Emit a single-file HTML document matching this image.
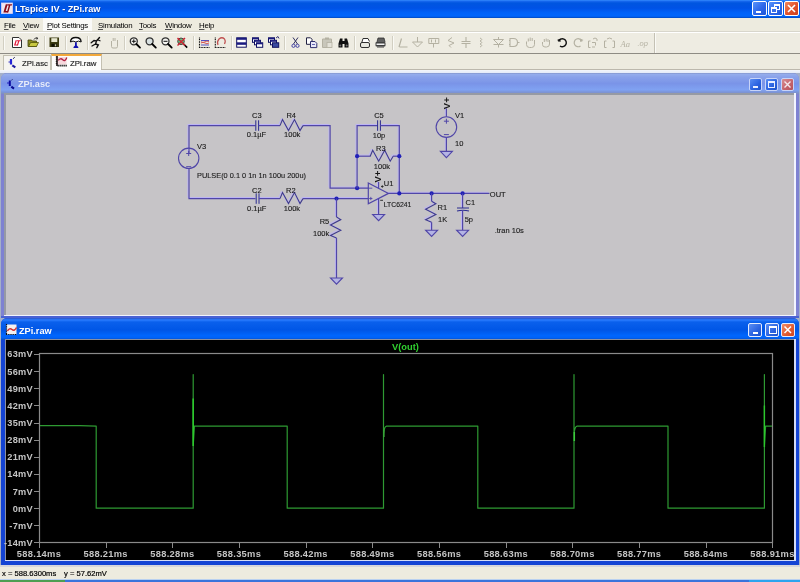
<!DOCTYPE html><html><head><meta charset="utf-8"><style>
*{margin:0;padding:0;box-sizing:border-box}
html,body{width:800px;height:582px;overflow:hidden;background:#EDEBDF;font-family:"Liberation Sans",sans-serif}
.a{position:absolute}
svg{position:absolute;left:0;top:0;overflow:visible;will-change:transform}
.t{white-space:nowrap;will-change:transform}
.tb{position:absolute;top:1px;width:15px;height:15px;border:1px solid #fff;border-radius:2px;background:linear-gradient(135deg,#5A94FA,#2C66EA 55%,#1E56D6)}
.mb{position:absolute;border:1px solid #E8EEFC;border-radius:2px;background:linear-gradient(135deg,#5A8EF4,#2A62E0 60%,#1E52C8)}
.wt{position:absolute;font-weight:bold;font-size:9.2px;line-height:14px;white-space:nowrap;will-change:transform}
.sep{position:absolute;top:36px;width:1px;height:14px;background:#D2CFC2;box-shadow:1px 0 0 #FAFAF6}
</style></head><body>
<div class="a" style="left:0;top:0;width:800px;height:17.5px;background:linear-gradient(#3A92FF 0,#1A6AF0 1px,#0056E0 3px,#0052E6 45%,#0062F8 70%,#0066FC 90%,#0048C0 100%)"></div>
<svg width="20" height="18"><rect x="1.5" y="3" width="11" height="10.5" fill="#F0E6EE" stroke="#DCD4F4" stroke-width="0.8"/><path d="M5.8 4.2l-2.4 8.3h4.2l0.4-1.4H5.7l2-6.9z" fill="#8A0C1A"/><path d="M7.6 4.2h4.6l-0.4 1.4h-1.5l-2 6.9H6.8l2-6.9H7.2z" fill="#8A0C1A"/></svg>
<div class="a t" style="left:15px;top:2px;color:#fff;font-weight:bold;font-size:9.2px;line-height:14px;text-shadow:0.5px 0.5px 0 #0A3AA0">LTspice IV - ZPi.raw</div>
<div class="tb" style="left:752px"><div class="a" style="left:3px;top:9px;width:5px;height:2px;background:#fff"></div></div>
<div class="tb" style="left:768px"><div class="a" style="left:5px;top:2px;width:6px;height:6px;border:1px solid #fff;border-top-width:2px"></div><div class="a" style="left:2px;top:5px;width:6px;height:6px;border:1px solid #fff;border-top-width:2px;background:#3A6FE8"></div></div>
<div class="tb" style="left:784px;background:linear-gradient(135deg,#F2885E,#E0502A 55%,#CC4020)"><svg width="13" height="13"><path d="M3 3L10 10M10 3L3 10" stroke="#fff" stroke-width="1.6"/></svg></div>
<div class="a" style="left:0;top:17.5px;width:800px;height:13.5px;background:#EDEBDF"></div>
<div class="a" style="left:43px;top:18px;width:49px;height:13px;background:#FAFAF8"></div>
<div class="a t" style="left:4px;top:18.5px;font-size:7.9px;letter-spacing:-0.25px;line-height:13px;color:#000"><u style="text-decoration-thickness:0.6px;text-underline-offset:0.8px;text-decoration-color:#505050">F</u>ile</div>
<div class="a t" style="left:23.2px;top:18.5px;font-size:7.9px;letter-spacing:-0.25px;line-height:13px;color:#000"><u style="text-decoration-thickness:0.6px;text-underline-offset:0.8px;text-decoration-color:#505050">V</u>iew</div>
<div class="a t" style="left:46.8px;top:18.5px;font-size:7.9px;letter-spacing:-0.25px;line-height:13px;color:#000"><u style="text-decoration-thickness:0.6px;text-underline-offset:0.8px;text-decoration-color:#505050">P</u>lot Settings</div>
<div class="a t" style="left:97.5px;top:18.5px;font-size:7.9px;letter-spacing:-0.25px;line-height:13px;color:#000"><u style="text-decoration-thickness:0.6px;text-underline-offset:0.8px;text-decoration-color:#505050">S</u>imulation</div>
<div class="a t" style="left:139px;top:18.5px;font-size:7.9px;letter-spacing:-0.25px;line-height:13px;color:#000"><u style="text-decoration-thickness:0.6px;text-underline-offset:0.8px;text-decoration-color:#505050">T</u>ools</div>
<div class="a t" style="left:164.5px;top:18.5px;font-size:7.9px;letter-spacing:-0.25px;line-height:13px;color:#000"><u style="text-decoration-thickness:0.6px;text-underline-offset:0.8px;text-decoration-color:#505050">W</u>indow</div>
<div class="a t" style="left:198.8px;top:18.5px;font-size:7.9px;letter-spacing:-0.25px;line-height:13px;color:#000"><u style="text-decoration-thickness:0.6px;text-underline-offset:0.8px;text-decoration-color:#505050">H</u>elp</div>
<div class="a" style="left:0;top:31px;width:800px;height:1px;background:#D8D6CC"></div>
<div class="a" style="left:0;top:32px;width:800px;height:1px;background:#FFFFFF"></div>
<div class="a" style="left:0;top:33px;width:800px;height:20px;background:#EEECE2"></div>
<div class="a" style="left:0;top:53px;width:800px;height:1px;background:#8E8C84"></div>
<div class="sep" style="left:2.5px"></div>
<div class="sep" style="left:43.5px"></div>
<div class="sep" style="left:65px"></div>
<div class="sep" style="left:87px"></div>
<div class="sep" style="left:123.5px"></div>
<div class="sep" style="left:193px"></div>
<div class="sep" style="left:231px"></div>
<div class="sep" style="left:284px"></div>
<div class="sep" style="left:353.5px"></div>
<div class="sep" style="left:391.5px"></div>
<div class="a" style="left:654px;top:33px;width:1px;height:20px;background:#C4C1B4;box-shadow:1px 0 0 #FAFAF6"></div>
<div class="a" style="left:0;top:54px;width:800px;height:16px;background:#EDEBDF"></div>
<div class="a" style="left:3px;top:54.5px;width:48px;height:15.5px;background:#F6F5F0;border:1px solid #C4C1B2;border-bottom:none"></div>
<div class="a" style="left:50.5px;top:54px;width:51px;height:16px;background:#FDFDFB;border:1px solid #C4C1B2;border-top:2px solid #F2A83A;border-bottom:none"></div>
<div class="a t" style="left:21.7px;top:57px;font-size:7.8px;line-height:13px;color:#1A1A1A;-webkit-text-stroke:0.15px #1A1A1A">ZPi.asc</div>
<div class="a t" style="left:69.5px;top:56.5px;font-size:7.8px;line-height:13px;color:#1A1A1A;-webkit-text-stroke:0.15px #1A1A1A">ZPi.raw</div>
<div class="a" style="left:0;top:70px;width:800px;height:495px;background:#A4B0C8"></div>
<div class="a" style="left:101px;top:68.5px;width:699px;height:1.5px;background:#BCB8AC"></div>
<div class="a" style="left:0;top:70px;width:800px;height:3px;background:linear-gradient(#F4F6FA,#E4EAF8)"></div>
<div class="a" style="left:1px;top:73px;width:798px;height:245px;background:#7E82D2;border-radius:6px 6px 0 0"></div>
<div class="a" style="left:1px;top:73px;width:798px;height:21px;border-radius:6px 6px 0 0;background:linear-gradient(#8496CC 0,#94ACEC 1.5px,#8AA2EA 4px,#7A94E8 50%,#80A2F2 80%,#7C98E0 88%,#7E8CC0 100%)"></div>
<div class="a" style="left:4px;top:93px;width:792px;height:223px;background:#969AA4;border-right:2px solid #F2F4FF;border-bottom:1.5px solid #F2F4FF"></div>
<div class="a" style="left:5.5px;top:94.5px;width:788.5px;height:220px;background:#C6C4C7"></div>
<div class="wt" style="left:18.4px;top:77px;color:#E6ECFA">ZPi.asc</div>
<div class="mb" style="left:748.5px;top:78px;width:13px;height:13px;border-color:#C8D4F8;"></div>
<div class="mb" style="left:765px;top:78px;width:13px;height:13px;border-color:#C8D4F8;"></div>
<div class="mb" style="left:781px;top:78px;width:13px;height:13px;border-color:#C8D4F8;background:linear-gradient(135deg,#D89094,#C4626A 60%,#B4525A);"></div>
<div class="a" style="left:752.5px;top:86px;width:5px;height:2px;background:#E8EEFF"></div>
<div class="a" style="left:768px;top:81px;width:7px;height:7px;border:1px solid #E8EEFF;border-top-width:2px"></div>
<svg width="1" height="1"><path d="M784.5 81.5l6 6M790.5 81.5l-6 6" stroke="#F4E8EC" stroke-width="1.4"/></svg>
<div class="a" style="left:1px;top:316px;width:798px;height:2px;background:#4A62D4"></div>
<div class="a" style="left:1px;top:318px;width:798px;height:247px;background:#1444D4;border-radius:6px 6px 0 0"></div>
<div class="a" style="left:1px;top:318px;width:798px;height:22px;border-radius:6px 6px 0 0;background:linear-gradient(#2A54C8 0,#2A7CFF 2px,#0A60EC 4px,#0056E6 55%,#0066FE 80%,#0062F6 90%,#0848C0 100%)"></div>
<div class="a" style="left:4.5px;top:339.2px;width:791.5px;height:222.3px;background:#8A90A0;border-right:2px solid #D4DCF6;border-bottom:1.5px solid #D4DCF6"></div>
<div class="a" style="left:5.5px;top:340.3px;width:788.5px;height:219.5px;background:#000"></div>
<div class="wt" style="left:19px;top:323.5px;color:#fff">ZPi.raw</div>
<div class="mb" style="left:748px;top:323px;width:14px;height:14px;border-color:#E4ECFF;"></div>
<div class="mb" style="left:765px;top:323px;width:14px;height:14px;border-color:#E4ECFF;"></div>
<div class="mb" style="left:781px;top:323px;width:14px;height:14px;border-color:#E4ECFF;background:linear-gradient(135deg,#F08C68,#E05A30 60%,#CC4620);"></div>
<div class="a" style="left:752.5px;top:332px;width:5px;height:2px;background:#fff"></div>
<div class="a" style="left:768.5px;top:326px;width:8px;height:8px;border:1px solid #fff;border-top-width:2px"></div>
<svg width="1" height="1"><path d="M784.5 326.5l6.5 6.5M791 326.5l-6.5 6.5" stroke="#fff" stroke-width="1.5"/></svg>
<div class="a" style="left:0;top:564.5px;width:800px;height:14px;background:#EDEBDF;border-top:2.5px solid #D6D6DA"></div>
<div class="a t" style="left:1.5px;top:567.5px;font-size:7.6px;line-height:12px;color:#000;-webkit-text-stroke:0.2px #000">x = 588.6300ms</div>
<div class="a t" style="left:64px;top:567.5px;font-size:7.6px;line-height:12px;color:#000;-webkit-text-stroke:0.2px #000">y = 57.62mV</div>
<div class="a" style="left:0;top:578.5px;width:800px;height:3.5px;background:#3A74DC;border-top:1px solid #B8D0F0"></div>
<div class="a" style="left:0;top:579.5px;width:64.5px;height:2.5px;background:#4E9E52"></div>
<div class="a" style="left:749px;top:579.5px;width:51px;height:2.5px;background:#2EA4EE"></div>
<svg width="800" height="582" style="font-family:'Liberation Sans',sans-serif"><path d="M12.5 37.5h6.5l2.5 2.5v7.5h-9z" fill="#fff" stroke="#303030" stroke-width="1"/><path d="M15.6 40.2l-1.6 5.3h3.4l0.3-1h-2.1l1.3-4.3z" fill="#E01838"/><path d="M17 40.2h3.8l-0.3 1h-1.2l-1.3 4.3h-1.2l1.3-4.3h-1.3z" fill="#E01838"/><path d="M28 40h3.5l1 1h4v5.5H28z" fill="#8C8C20" stroke="#40400A" stroke-width="0.8"/><path d="M28.5 46.5l2-4h8l-2 4z" fill="#C8C840" stroke="#50500A" stroke-width="0.8"/><path d="M34 39.5q1.5-2.5 3.5-1.5" fill="none" stroke="#202020" stroke-width="1"/><path d="M37 37.3l1.2 1.8l-2 0.3z" fill="#202020"/><rect x="49.5" y="37.5" width="9.5" height="9.5" fill="#3A3A10"/><rect x="51.3" y="38.2" width="6" height="3.8" fill="#E8E8D0"/><rect x="51.5" y="43.8" width="5.5" height="3" fill="#101000"/><rect x="54.8" y="44.3" width="1.4" height="2" fill="#C8C8A0"/><path d="M70.5 42q0-4.5 5.3-4.5q5.3 0 5.3 4.5" fill="#fff" stroke="#101010" stroke-width="1.3"/><path d="M70.5 42q2.5-1.8 5.3 0q2.8-1.8 5.3 0" fill="none" stroke="#101010" stroke-width="1"/><path d="M75 42.2h1.8v3.3l1.5 1.5v1h-4.8v-1l1.5-1.5z" fill="#1010B0"/><path d="M99.5 37.5l-3 3.5l-2.5-0.5l-2.8 2.2M96.5 41l-1 3l2.8 1l-1.5 2.7M95.5 44l-3.5 2" fill="none" stroke="#101010" stroke-width="1.4" stroke-linecap="round"/><path d="M97 39.5l3.5 1.5" stroke="#101010" stroke-width="1.1"/><path d="M111.5 41v5.5q0 1.5 1.5 1.5h3q1.5 0 1.5-1.5V40M113.2 41v-3M115 41v-3" fill="none" stroke="#B4B1A2" stroke-width="1"/><circle cx="133.8" cy="41.3" r="3.5" fill="#F4F4F0" stroke="#303030" stroke-width="1.3"/><path d="M136.4 44l3.6 3.6" stroke="#000" stroke-width="1.8" stroke-linecap="round"/><path d="M131.8 41.3h4" stroke="#101010" stroke-width="1"/><path d="M133.8 39.3v4" stroke="#101010" stroke-width="1"/><circle cx="149.6" cy="41.3" r="3.5" fill="#D8E0E0" stroke="#303030" stroke-width="1.3"/><path d="M152.2 44l3.6 3.6" stroke="#000" stroke-width="1.8" stroke-linecap="round"/><circle cx="165.5" cy="41.3" r="3.5" fill="#F4F4F0" stroke="#303030" stroke-width="1.3"/><path d="M168.1 44l3.6 3.6" stroke="#000" stroke-width="1.8" stroke-linecap="round"/><path d="M163.5 41.3h4" stroke="#101010" stroke-width="1"/><circle cx="181" cy="41.3" r="3.3" fill="#60C080" stroke="#504040" stroke-width="1"/><path d="M183.6 44l3.6 3.6" stroke="#000" stroke-width="1.6"/><path d="M177.5 38l7.5 7.5M185 38l-7.5 7.5" stroke="#D02030" stroke-width="1.4"/><path d="M199.5 37.5v10h10" fill="none" stroke="#101010" stroke-width="1.1" stroke-dasharray="1 0.6"/><path d="M201 40.5h8M201 45h8" stroke="#5050C0" stroke-width="1"/><path d="M201 43q2-1.5 4 0t4 0M201 41.8q2 1.5 4 0t4 0" fill="none" stroke="#D05050" stroke-width="0.9"/><path d="M215.3 37.5v10h10" fill="none" stroke="#101010" stroke-width="1.1" stroke-dasharray="1 0.6"/><path d="M218 45q-1.5-3 1-6q3-2.5 5.5 0q1.5 2 0 5" fill="none" stroke="#C05050" stroke-width="1.2"/><rect x="236.7" y="37.8" width="9.6" height="9.4" fill="#fff" stroke="#101060" stroke-width="1"/><rect x="236.7" y="37.8" width="9.6" height="2" fill="#1A1A80"/><rect x="236.7" y="42.3" width="9.6" height="1" fill="#1A1A80"/><rect x="236.7" y="43" width="9.6" height="1.8" fill="#1A1A80"/><rect x="252.5" y="37.8" width="6" height="4.5" fill="#fff" stroke="#101060"/><rect x="252.5" y="37.8" width="6" height="1.5" fill="#1A1A80"/><rect x="254.5" y="40.3" width="6" height="4.5" fill="#fff" stroke="#101060"/><rect x="254.5" y="40.3" width="6" height="1.5" fill="#1A1A80"/><rect x="256.5" y="42.8" width="6.2" height="4.5" fill="#fff" stroke="#101060"/><rect x="256.5" y="42.8" width="6.2" height="1.5" fill="#1A1A80"/><rect x="268.5" y="37.8" width="6" height="4.5" fill="#fff" stroke="#101060"/><rect x="268.5" y="37.8" width="6" height="1.5" fill="#1A1A80"/><rect x="270.5" y="40.3" width="6" height="4.5" fill="#fff" stroke="#101060"/><rect x="270.5" y="40.3" width="6" height="1.5" fill="#1A1A80"/><rect x="272.5" y="42.8" width="6.2" height="4.5" fill="#3A4AA0" stroke="#101060"/><path d="M276 38l2-1.5l1 2" fill="none" stroke="#101060" stroke-width="0.8"/><path d="M293 37.5l4.5 6.5M298 37.5l-4.5 6.5" stroke="#303060" stroke-width="1"/><circle cx="293.5" cy="45.8" r="1.6" fill="none" stroke="#4040A0" stroke-width="1"/><circle cx="297.5" cy="45.8" r="1.6" fill="none" stroke="#4040A0" stroke-width="1"/><path d="M306.5 37.8h4l1.5 1.5v5h-5.5z" fill="#fff" stroke="#202040" stroke-width="1"/><path d="M310.5 41.5h4.5l1.8 1.8v4.3h-6.3z" fill="#E8E8F8" stroke="#303070" stroke-width="1"/><path d="M312 44.5h3" stroke="#4040A0" stroke-width="0.8"/><path d="M322.5 39h9v8.5h-9z" fill="#C8C6BA" stroke="#B4B1A2"/><rect x="325" y="37.5" width="4" height="2" fill="#B4B1A2"/><rect x="327" y="42.5" width="5" height="5" fill="#E4E2D8" stroke="#B4B1A2" stroke-width="0.8"/><path d="M338.5 47.5v-4l1.5-5h2.5v9zM348.5 47.5v-4l-1.5-5h-2.5v9z" fill="#101010"/><rect x="342" y="41" width="3" height="3" fill="#101010"/><circle cx="340.3" cy="45.5" r="1" fill="#707070"/><circle cx="346.7" cy="45.5" r="1" fill="#707070"/><path d="M361.5 43.5l1.5-5h5l1.5 3" fill="#fff" stroke="#303030" stroke-width="1"/><rect x="360.5" y="42.5" width="9" height="5" rx="1.5" fill="#E8E8E0" stroke="#303030" stroke-width="1"/><path d="M377 42l1-4h6l1 4" fill="#606060" stroke="#303030" stroke-width="0.8"/><rect x="375.5" y="42" width="10" height="4.5" rx="1" fill="#404040"/><rect x="376.5" y="43.5" width="8" height="1.5" fill="#F0F0F0"/><path d="M377 47h7" stroke="#404040"/><path d="M399 47l2.5-8.5M399.5 47h8" stroke="#B4B1A2" stroke-width="1.2"/><path d="M417.5 37v5M412.5 42h10l-5 5z" fill="none" stroke="#B4B1A2" stroke-width="1"/><path d="M428.8 38.5h10v5h-10zM431.5 39.5v3M435.5 39.5v3M433.5 43.5v4" fill="none" stroke="#B4B1A2" stroke-width="1"/><path d="M452 37.5l-4 3l6 2.5l-5 2.5l2 2" fill="none" stroke="#B4B1A2" stroke-width="1"/><path d="M466 37v4.5M461.5 41.5h9M461.5 43.5h9M466 43.5v4.5" fill="none" stroke="#B4B1A2" stroke-width="1.1"/><path d="M480 38q3.5 1.5 0 3q3.5 1.5 0 3q3.5 1.5 0 3" fill="none" stroke="#B4B1A2" stroke-width="1"/><path d="M498.5 37v2M493.5 39.5h10l-5 5zM493.5 44.5h10M498.5 44.5v3" fill="none" stroke="#B4B1A2" stroke-width="1"/><path d="M510 38.5h3.5q4 0 4 4t-4 4H510zM517.5 42.5h2M509 40.5h1M509 44.5h1" fill="none" stroke="#B4B1A2" stroke-width="1.1"/><path d="M526.5 41.5v3q0 3 3 3h2q3 0 3-3v-4.5M528.3 41.5v-3M530.2 41v-3.5M532.2 41v-3" fill="none" stroke="#B4B1A2" stroke-width="1"/><path d="M542.5 42v2.5q0 2.5 2.5 2.5h1.5q3 0 3-3V40M544.3 42v-3M546.2 41.5v-3M548 42v-3" fill="none" stroke="#B4B1A2" stroke-width="1"/><path d="M558.5 41.5a4 4 0 1 1 1.5 4.5" fill="none" stroke="#101010" stroke-width="1.4"/><path d="M557 40l3.5-1.5v3.5z" fill="#101010"/><path d="M582 41.5a4 4 0 1 0 -1.5 4.5" fill="none" stroke="#B4B1A2" stroke-width="1.2"/><path d="M583.5 40l-3.5-1.5v3.5z" fill="#B4B1A2"/><path d="M588.5 41v6.5M588.5 47.5h2M588.5 41h2M592 42.5h3.5v3M592 47h3M593 39q2-2 4 0v2" fill="none" stroke="#B4B1A2" stroke-width="1"/><path d="M604.5 41v6.5h2M604.5 41h2M614.5 41v6.5h-2M614.5 41h-2M607 39q2.5-2 5 0" fill="none" stroke="#B4B1A2" stroke-width="1"/><text x="620.5" y="46.5" font-size="8.5" font-style="italic" font-family="Liberation Serif" fill="#B4B1A2">Aa</text><text x="637.5" y="45.5" font-size="7.5" font-style="italic" fill="#B4B1A2">.op</text><path d="M13 58.8l1.8-1.6" stroke="#303060" stroke-width="1"/><path d="M11 59v5.5" stroke="#2424D8" stroke-width="2.2"/><path d="M8.5 62h2" stroke="#3030C0" stroke-width="1"/><path d="M12.3 65.3l3 2" stroke="#1A1AA0" stroke-width="2"/><rect x="58" y="57" width="8.5" height="7.5" fill="#F6D8DC"/><path d="M57 56v10" stroke="#1A1010" stroke-width="1.6"/><path d="M55.8 57h1.5M55.8 59.2h1.5M55.8 61.4h1.5M55.8 63.6h1.5" stroke="#201818" stroke-width="1"/><path d="M57.5 65.6h9.3" stroke="#151515" stroke-width="1.8" stroke-dasharray="1.3 0.7"/><path d="M58.3 60.3q2.2-2.8 4.5-0.5t4-2.3" fill="none" stroke="#B02040" stroke-width="1.3"/><path d="M11 80.5l2-1.3" stroke="#4050A0" stroke-width="0.9"/><path d="M9.8 80.5v5.5" stroke="#0A0AA0" stroke-width="2"/><path d="M7 83h2" stroke="#2020C0" stroke-width="1"/><path d="M11.3 86.6l2.7 2" stroke="#0A0A90" stroke-width="2"/><rect x="6.5" y="324.5" width="10" height="10" fill="#F4F0F0"/><path d="M6.5 324v11M6 334.5h11" fill="none" stroke="#101010" stroke-width="1.2" stroke-dasharray="1 0.8"/><path d="M7.5 331q2-3.5 4.5-1.5t4.5-2" fill="none" stroke="#D03030" stroke-width="1.5"/></svg>
<svg width="800" height="582" style="font-family:'Liberation Sans',sans-serif"><polyline fill="none" stroke="#BCB4F4" stroke-width="1" points="187.9,152.4 187.9,124.5 254.4,124.5"/><polyline fill="none" stroke="#BCB4F4" stroke-width="1" points="257.5,124.5 278.9,124.5"/><polyline fill="none" stroke="#BCB4F4" stroke-width="1" points="278.9,124.5 281.4,118.5 287.4,129.5 293.4,118.5 298.9,129.5 301.9,124.5"/><polyline fill="none" stroke="#BCB4F4" stroke-width="1" points="301.9,124.5 329,124.5 329,187.1 367.2,187.1"/><polyline fill="none" stroke="#BCB4F4" stroke-width="1" points="187.9,167.4 187.9,197.5 254.4,197.5"/><polyline fill="none" stroke="#BCB4F4" stroke-width="1" points="257.9,197.5 278.9,197.5"/><polyline fill="none" stroke="#BCB4F4" stroke-width="1" points="278.9,197.5 281.4,191.5 287.4,202.5 293.4,191.5 298.9,202.5 301.9,197.5"/><polyline fill="none" stroke="#BCB4F4" stroke-width="1" points="301.9,197.5 367.2,197.5"/><polyline fill="none" stroke="#BCB4F4" stroke-width="1" points="335.4,197.5 335.4,215.9"/><polyline fill="none" stroke="#BCB4F4" stroke-width="1" points="335.4,215.9 339.7,218.5 329.4,224 339.7,229.2 329.4,234.4 335.4,236.9"/><polyline fill="none" stroke="#BCB4F4" stroke-width="1" points="335.4,236.9 335.4,276.9"/><polyline fill="none" stroke="#BCB4F4" stroke-width="1" points="356,187.1 356,124.5 376.5,124.5"/><polyline fill="none" stroke="#BCB4F4" stroke-width="1" points="379.3,124.5 398.2,124.5 398.2,192.3"/><polyline fill="none" stroke="#BCB4F4" stroke-width="1" points="356,155.1 369.5,155.1"/><polyline fill="none" stroke="#BCB4F4" stroke-width="1" points="369.1,155.1 371.6,149.1 377.6,160.1 383.6,149.1 389.1,160.1 392.1,155.1"/><polyline fill="none" stroke="#BCB4F4" stroke-width="1" points="391.9,155.1 398.2,155.1"/><polyline fill="none" stroke="#BCB4F4" stroke-width="1" points="377.5,180.9 377.5,187.5"/><polyline fill="none" stroke="#BCB4F4" stroke-width="1" points="377.5,197.1 377.5,213.4"/><polyline fill="none" stroke="#BCB4F4" stroke-width="1" points="387.4,192.3 488.4,192.3"/><polyline fill="none" stroke="#BCB4F4" stroke-width="1" points="430.5,192.3 430.5,200.1"/><polyline fill="none" stroke="#BCB4F4" stroke-width="1" points="430.5,200.1 434.8,202.7 424.5,208.2 434.8,213.4 424.5,218.6 430.5,221.1"/><polyline fill="none" stroke="#BCB4F4" stroke-width="1" points="430.5,221.1 430.5,229.1"/><polyline fill="none" stroke="#BCB4F4" stroke-width="1" points="461.5,192.3 461.5,206.9"/><polyline fill="none" stroke="#BCB4F4" stroke-width="1" points="461.5,209.4 461.5,229.1"/><polyline fill="none" stroke="#BCB4F4" stroke-width="1" points="445.3,107.3 445.3,115.7"/><polyline fill="none" stroke="#BCB4F4" stroke-width="1" points="445.3,136.3 445.3,150.3"/><polyline fill="none" stroke="#5046A8" stroke-width="1.2" points="189,153.5 189,125.6 255.5,125.6"/><path d="M255.8 120.3v10.5M258.6 120.3v10.5" stroke="#2A2A90" stroke-width="1"/><polyline fill="none" stroke="#5046A8" stroke-width="1.2" points="258.6,125.6 280,125.6"/><polyline fill="none" stroke="#3E3A8E" stroke-width="1.1" points="280,125.6 282.5,119.6 288.5,130.6 294.5,119.6 300,130.6 303,125.6"/><polyline fill="none" stroke="#5046A8" stroke-width="1.2" points="303,125.6 330.1,125.6 330.1,188.2 368.3,188.2"/><circle cx="188.7" cy="158.3" r="10.2" fill="none" stroke="#5046A8" stroke-width="1.1"/><path d="M186.2 153.5h5M188.7 151v5M186.2 166.7h5" stroke="#5046A8" stroke-width="1"/><polyline fill="none" stroke="#5046A8" stroke-width="1.2" points="189,168.5 189,198.6 255.5,198.6"/><path d="M256.2 193.3v10.5M259 193.3v10.5" stroke="#2A2A90" stroke-width="1"/><polyline fill="none" stroke="#5046A8" stroke-width="1.2" points="259,198.6 280,198.6"/><polyline fill="none" stroke="#3E3A8E" stroke-width="1.1" points="280,198.6 282.5,192.6 288.5,203.6 294.5,192.6 300,203.6 303,198.6"/><polyline fill="none" stroke="#5046A8" stroke-width="1.2" points="303,198.6 368.3,198.6"/><circle cx="336.5" cy="198.6" r="2.1" fill="#2020B8"/><polyline fill="none" stroke="#5046A8" stroke-width="1.2" points="336.5,198.6 336.5,217"/><polyline fill="none" stroke="#3E3A8E" stroke-width="1.1" points="336.5,217 340.8,219.6 330.5,225.1 340.8,230.3 330.5,235.5 336.5,238"/><polyline fill="none" stroke="#5046A8" stroke-width="1.2" points="336.5,238 336.5,278"/><polygon fill="#B4B4E4" stroke="#5046A8" stroke-width="1.1" points="330.5,278 342.5,278 336.5,284.2"/><circle cx="357.1" cy="188.2" r="2.1" fill="#2020B8"/><polyline fill="none" stroke="#5046A8" stroke-width="1.2" points="357.1,188.2 357.1,125.6 377.6,125.6"/><path d="M377.6 120.3v10.5M380.4 120.3v10.5" stroke="#2A2A90" stroke-width="1"/><polyline fill="none" stroke="#5046A8" stroke-width="1.2" points="380.4,125.6 399.3,125.6 399.3,193.4"/><polyline fill="none" stroke="#5046A8" stroke-width="1.2" points="357.1,156.2 370.6,156.2"/><polyline fill="none" stroke="#3E3A8E" stroke-width="1.1" points="370.2,156.2 372.7,150.2 378.7,161.2 384.7,150.2 390.2,161.2 393.2,156.2"/><polyline fill="none" stroke="#5046A8" stroke-width="1.2" points="393,156.2 399.3,156.2"/><circle cx="357.1" cy="156.2" r="2.1" fill="#2020B8"/><circle cx="399.3" cy="156.2" r="2.1" fill="#2020B8"/><polygon points="368.3,183 388.5,193.4 368.3,203.7" fill="none" stroke="#5046A8" stroke-width="1.2"/><path d="M368.3 188.2h4M369.2 198.5h3.2M370.8 196.9v3.2" stroke="#5046A8" stroke-width="0.9"/><polyline fill="none" stroke="#5046A8" stroke-width="1.1" points="378.6,182 378.6,188.6"/><path d="M381 186.5h2.6M382.3 185.2v2.6" stroke="#202020" stroke-width="0.8"/><polyline fill="none" stroke="#5046A8" stroke-width="1.2" points="378.6,198.2 378.6,214.5"/><path d="M380.2 200.3h2.8" stroke="#202020" stroke-width="0.9"/><polygon fill="#B4B4E4" stroke="#5046A8" stroke-width="1.1" points="372.6,214.5 384.6,214.5 378.6,220.7"/><polyline fill="none" stroke="#5046A8" stroke-width="1.2" points="388.5,193.4 489.5,193.4"/><circle cx="399.3" cy="193.4" r="2.1" fill="#2020B8"/><circle cx="431.6" cy="193.4" r="2.1" fill="#2020B8"/><circle cx="462.6" cy="193.4" r="2.1" fill="#2020B8"/><polyline fill="none" stroke="#5046A8" stroke-width="1.2" points="431.6,193.4 431.6,201.2"/><polyline fill="none" stroke="#3E3A8E" stroke-width="1.1" points="431.6,201.2 435.9,203.8 425.6,209.3 435.9,214.5 425.6,219.7 431.6,222.2"/><polyline fill="none" stroke="#5046A8" stroke-width="1.2" points="431.6,222.2 431.6,230.2"/><polygon fill="#B4B4E4" stroke="#5046A8" stroke-width="1.1" points="425.6,230.2 437.6,230.2 431.6,236.4"/><polyline fill="none" stroke="#5046A8" stroke-width="1.2" points="462.6,193.4 462.6,208"/><path d="M457 208h12M457 211q6 -1.6 12 0" stroke="#2A2A90" stroke-width="1.1" fill="none"/><polyline fill="none" stroke="#5046A8" stroke-width="1.2" points="462.6,210.5 462.6,230.2"/><polygon fill="#B4B4E4" stroke="#5046A8" stroke-width="1.1" points="456.6,230.2 468.6,230.2 462.6,236.4"/><polyline fill="none" stroke="#5046A8" stroke-width="1.1" points="446.4,108.4 446.4,116.8"/><circle cx="446.4" cy="127.1" r="10.3" fill="none" stroke="#5046A8" stroke-width="1.1"/><path d="M443.9 121.2h5M446.4 118.7v5M443.9 134.6h5" stroke="#5046A8" stroke-width="1"/><polyline fill="none" stroke="#5046A8" stroke-width="1.2" points="446.4,137.4 446.4,151.4"/><polygon fill="#B4B4E4" stroke="#5046A8" stroke-width="1.1" points="440.4,151.4 452.4,151.4 446.4,157.6"/><text transform="translate(449.6,109.2) rotate(-90)" font-size="9.5" font-weight="bold" fill="#151515">V+</text><text transform="translate(381,182.6) rotate(-90)" font-size="9.5" font-weight="bold" fill="#151515">V+</text><text x="256.8" y="118.1" font-size="7.5" fill="#1A1A1A" stroke="#1A1A1A" stroke-width="0.12" text-anchor="middle">C3</text><text x="291.2" y="118.1" font-size="7.5" fill="#1A1A1A" stroke="#1A1A1A" stroke-width="0.12" text-anchor="middle">R4</text><text x="256.5" y="137.2" font-size="7.5" fill="#1A1A1A" stroke="#1A1A1A" stroke-width="0.12" text-anchor="middle">0.1µF</text><text x="292.2" y="137.2" font-size="7.5" fill="#1A1A1A" stroke="#1A1A1A" stroke-width="0.12" text-anchor="middle">100k</text><text x="256.8" y="192.7" font-size="7.5" fill="#1A1A1A" stroke="#1A1A1A" stroke-width="0.12" text-anchor="middle">C2</text><text x="290.8" y="192.7" font-size="7.5" fill="#1A1A1A" stroke="#1A1A1A" stroke-width="0.12" text-anchor="middle">R2</text><text x="256.7" y="210.7" font-size="7.5" fill="#1A1A1A" stroke="#1A1A1A" stroke-width="0.12" text-anchor="middle">0.1µF</text><text x="292" y="210.7" font-size="7.5" fill="#1A1A1A" stroke="#1A1A1A" stroke-width="0.12" text-anchor="middle">100k</text><text x="197" y="149.2" font-size="7.5" fill="#1A1A1A" stroke="#1A1A1A" stroke-width="0.12" text-anchor="start">V3</text><text x="197" y="178.1" font-size="7.5" fill="#1A1A1A" stroke="#1A1A1A" stroke-width="0.12" textLength="109" lengthAdjust="spacingAndGlyphs">PULSE(0 0.1 0 1n 1n 100u 200u)</text><text x="379" y="118.4" font-size="7.5" fill="#1A1A1A" stroke="#1A1A1A" stroke-width="0.12" text-anchor="middle">C5</text><text x="379" y="137.5" font-size="7.5" fill="#1A1A1A" stroke="#1A1A1A" stroke-width="0.12" text-anchor="middle">10p</text><text x="380.8" y="150.6" font-size="7.5" fill="#1A1A1A" stroke="#1A1A1A" stroke-width="0.12" text-anchor="middle">R3</text><text x="382" y="169.2" font-size="7.5" fill="#1A1A1A" stroke="#1A1A1A" stroke-width="0.12" text-anchor="middle">100k</text><text x="383.8" y="186.2" font-size="7.5" fill="#1A1A1A" stroke="#1A1A1A" stroke-width="0.12" text-anchor="start">U1</text><text x="383.8" y="206.8" font-size="7.5" fill="#1A1A1A" stroke="#1A1A1A" stroke-width="0.12" textLength="27.6" lengthAdjust="spacingAndGlyphs">LTC6241</text><text x="329.3" y="223.9" font-size="7.5" fill="#1A1A1A" stroke="#1A1A1A" stroke-width="0.12" text-anchor="end">R5</text><text x="329.3" y="236.2" font-size="7.5" fill="#1A1A1A" stroke="#1A1A1A" stroke-width="0.12" text-anchor="end">100k</text><text x="437.6" y="209.5" font-size="7.5" fill="#1A1A1A" stroke="#1A1A1A" stroke-width="0.12" text-anchor="start">R1</text><text x="438" y="221.5" font-size="7.5" fill="#1A1A1A" stroke="#1A1A1A" stroke-width="0.12" text-anchor="start">1K</text><text x="465.6" y="204.7" font-size="7.5" fill="#1A1A1A" stroke="#1A1A1A" stroke-width="0.12" text-anchor="start">C1</text><text x="464.7" y="222.4" font-size="7.5" fill="#1A1A1A" stroke="#1A1A1A" stroke-width="0.12" text-anchor="start">5p</text><text x="489.8" y="196.9" font-size="7.5" fill="#1A1A1A" stroke="#1A1A1A" stroke-width="0.12" text-anchor="start">OUT</text><text x="494.7" y="233.4" font-size="7.5" fill="#1A1A1A" stroke="#1A1A1A" stroke-width="0.12" text-anchor="start">.tran 10s</text><text x="455.1" y="117.8" font-size="7.5" fill="#1A1A1A" stroke="#1A1A1A" stroke-width="0.12" text-anchor="start">V1</text><text x="455.1" y="146.2" font-size="7.5" fill="#1A1A1A" stroke="#1A1A1A" stroke-width="0.12" text-anchor="start">10</text></svg>
<svg width="800" height="582" style="font-family:'Liberation Sans',sans-serif"><rect x="39.5" y="353.5" width="733" height="189" fill="none" stroke="#8A8A8A" stroke-width="1.2"/><path d="M34 354.5H39" stroke="#8A8A8A" stroke-width="1"/><text x="33" y="357.4" font-size="9.2" letter-spacing="0.3" font-weight="bold" fill="#C4C4C4" text-anchor="end">63mV</text><path d="M34 371.5H39" stroke="#8A8A8A" stroke-width="1"/><text x="33" y="374.5" font-size="9.2" letter-spacing="0.3" font-weight="bold" fill="#C4C4C4" text-anchor="end">56mV</text><path d="M34 388.5H39" stroke="#8A8A8A" stroke-width="1"/><text x="33" y="391.7" font-size="9.2" letter-spacing="0.3" font-weight="bold" fill="#C4C4C4" text-anchor="end">49mV</text><path d="M34 405.5H39" stroke="#8A8A8A" stroke-width="1"/><text x="33" y="408.8" font-size="9.2" letter-spacing="0.3" font-weight="bold" fill="#C4C4C4" text-anchor="end">42mV</text><path d="M34 423.5H39" stroke="#8A8A8A" stroke-width="1"/><text x="33" y="425.9" font-size="9.2" letter-spacing="0.3" font-weight="bold" fill="#C4C4C4" text-anchor="end">35mV</text><path d="M34 440.5H39" stroke="#8A8A8A" stroke-width="1"/><text x="33" y="443.1" font-size="9.2" letter-spacing="0.3" font-weight="bold" fill="#C4C4C4" text-anchor="end">28mV</text><path d="M34 457.5H39" stroke="#8A8A8A" stroke-width="1"/><text x="33" y="460.2" font-size="9.2" letter-spacing="0.3" font-weight="bold" fill="#C4C4C4" text-anchor="end">21mV</text><path d="M34 474.5H39" stroke="#8A8A8A" stroke-width="1"/><text x="33" y="477.4" font-size="9.2" letter-spacing="0.3" font-weight="bold" fill="#C4C4C4" text-anchor="end">14mV</text><path d="M34 491.5H39" stroke="#8A8A8A" stroke-width="1"/><text x="33" y="494.5" font-size="9.2" letter-spacing="0.3" font-weight="bold" fill="#C4C4C4" text-anchor="end">7mV</text><path d="M34 508.5H39" stroke="#8A8A8A" stroke-width="1"/><text x="33" y="511.6" font-size="9.2" letter-spacing="0.3" font-weight="bold" fill="#C4C4C4" text-anchor="end">0mV</text><path d="M34 525.5H39" stroke="#8A8A8A" stroke-width="1"/><text x="33" y="528.8" font-size="9.2" letter-spacing="0.3" font-weight="bold" fill="#C4C4C4" text-anchor="end">-7mV</text><path d="M34 542.5H39" stroke="#8A8A8A" stroke-width="1"/><text x="33" y="545.9" font-size="9.2" letter-spacing="0.3" font-weight="bold" fill="#C4C4C4" text-anchor="end">-14mV</text><path d="M39.5 542V548" stroke="#8A8A8A" stroke-width="1"/><text x="39.0" y="557.2" font-size="9.3" letter-spacing="0.3" font-weight="bold" fill="#C4C4C4" text-anchor="middle">588.14ms</text><path d="M106.5 542V548" stroke="#8A8A8A" stroke-width="1"/><text x="105.7" y="557.2" font-size="9.3" letter-spacing="0.3" font-weight="bold" fill="#C4C4C4" text-anchor="middle">588.21ms</text><path d="M172.5 542V548" stroke="#8A8A8A" stroke-width="1"/><text x="172.4" y="557.2" font-size="9.3" letter-spacing="0.3" font-weight="bold" fill="#C4C4C4" text-anchor="middle">588.28ms</text><path d="M239.5 542V548" stroke="#8A8A8A" stroke-width="1"/><text x="239.0" y="557.2" font-size="9.3" letter-spacing="0.3" font-weight="bold" fill="#C4C4C4" text-anchor="middle">588.35ms</text><path d="M306.5 542V548" stroke="#8A8A8A" stroke-width="1"/><text x="305.7" y="557.2" font-size="9.3" letter-spacing="0.3" font-weight="bold" fill="#C4C4C4" text-anchor="middle">588.42ms</text><path d="M372.5 542V548" stroke="#8A8A8A" stroke-width="1"/><text x="372.4" y="557.2" font-size="9.3" letter-spacing="0.3" font-weight="bold" fill="#C4C4C4" text-anchor="middle">588.49ms</text><path d="M439.5 542V548" stroke="#8A8A8A" stroke-width="1"/><text x="439.1" y="557.2" font-size="9.3" letter-spacing="0.3" font-weight="bold" fill="#C4C4C4" text-anchor="middle">588.56ms</text><path d="M506.5 542V548" stroke="#8A8A8A" stroke-width="1"/><text x="505.8" y="557.2" font-size="9.3" letter-spacing="0.3" font-weight="bold" fill="#C4C4C4" text-anchor="middle">588.63ms</text><path d="M572.5 542V548" stroke="#8A8A8A" stroke-width="1"/><text x="572.5" y="557.2" font-size="9.3" letter-spacing="0.3" font-weight="bold" fill="#C4C4C4" text-anchor="middle">588.70ms</text><path d="M639.5 542V548" stroke="#8A8A8A" stroke-width="1"/><text x="639.1" y="557.2" font-size="9.3" letter-spacing="0.3" font-weight="bold" fill="#C4C4C4" text-anchor="middle">588.77ms</text><path d="M706.5 542V548" stroke="#8A8A8A" stroke-width="1"/><text x="705.8" y="557.2" font-size="9.3" letter-spacing="0.3" font-weight="bold" fill="#C4C4C4" text-anchor="middle">588.84ms</text><path d="M772.5 542V548" stroke="#8A8A8A" stroke-width="1"/><text x="772.5" y="557.2" font-size="9.3" letter-spacing="0.3" font-weight="bold" fill="#C4C4C4" text-anchor="middle">588.91ms</text><text x="405.5" y="350.2" font-size="9.3" font-weight="bold" fill="#30D030" text-anchor="middle">V(out)</text><path d="M40 425.7 L80 425.7 L96.2 426.1 L96.2 508.2 L193.2 508.2 L193.2 374.5 L193.2 446 L194.4 426.1 L287.2 426.1 L287.2 508.2 L383.5 508.2 L383.5 374.5 L383.5 434 Q384.3 426.4 386.5 426.1 L477.8 426.1 L477.8 508.2 L574 508.2 L574 374.5 L574 434 Q574.8 426.4 577 426.1 L668 426.1 L668 508.2 L764.4 508.2 L764.4 374.5 L764.4 446 L765.6 426.1 L772 426.1" fill="none" stroke="#2E9A32" stroke-width="1.2" stroke-linejoin="round"/><path d="M193.2 398.5V446" stroke="#2CC82C" stroke-width="1.6"/><path d="M764.4 405.5V447" stroke="#2CC82C" stroke-width="1.4"/><path d="M383.9 429.5V437" stroke="#3AA83A" stroke-width="1.4"/><path d="M574.3 432V441" stroke="#3CC83C" stroke-width="1.5"/></svg>
</body></html>
